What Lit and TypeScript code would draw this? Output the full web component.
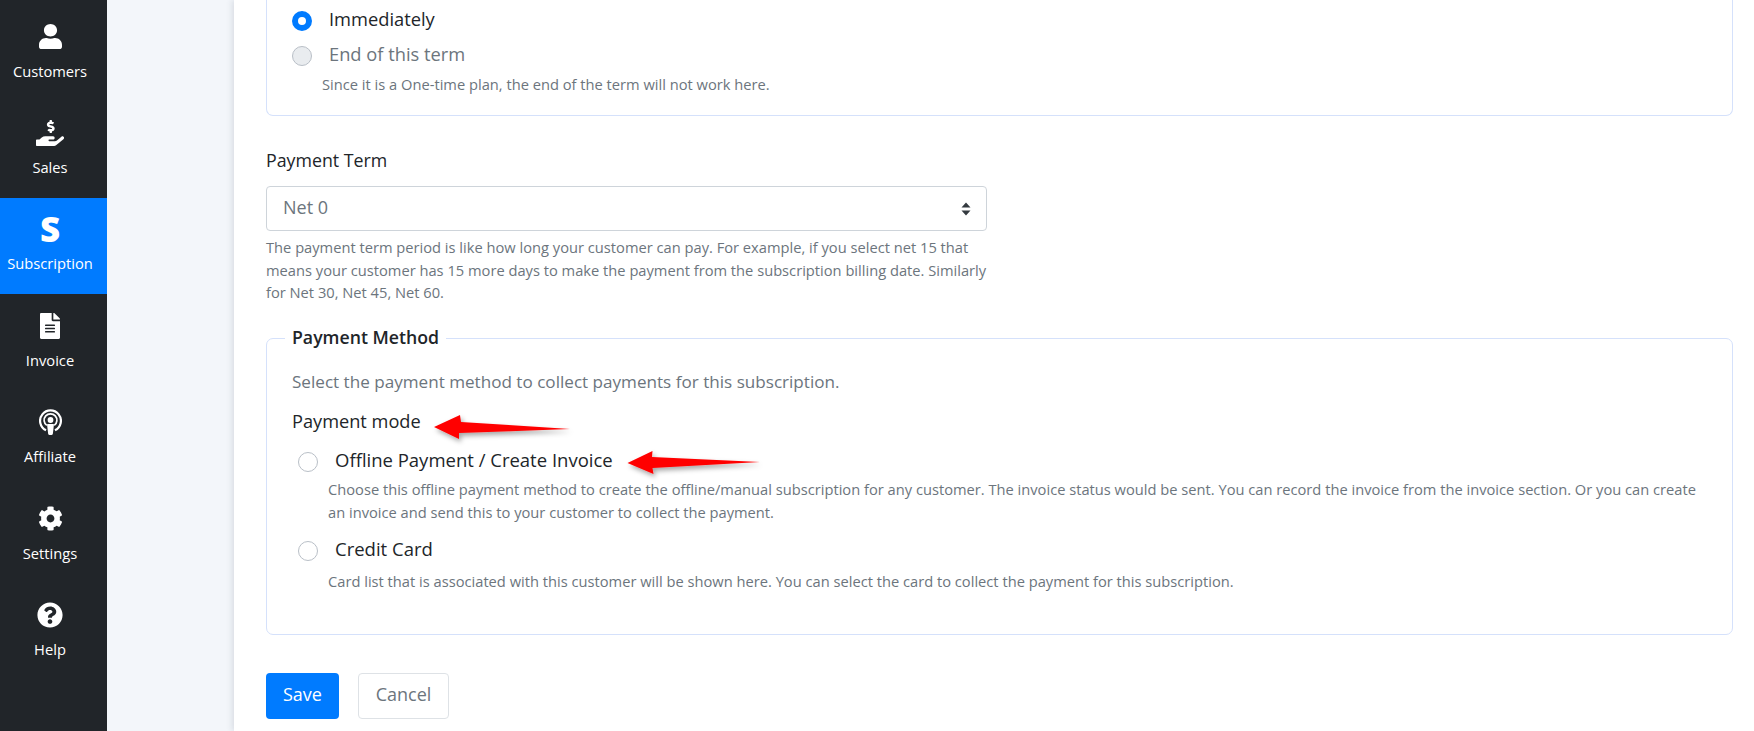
import { LitElement, html, css, svg } from "lit";
import { customElement } from "lit/decorators.js";

const ICONS: Record<string, any> = {
  user: html`<svg class="ic" style="width:23px;height:25px" viewBox="0 0 448 512" preserveAspectRatio="none"><path d="M224 256c70.7 0 128-57.3 128-128S294.7 0 224 0 96 57.3 96 128s57.3 128 128 128zm89.6 32h-16.7c-22.2 10.2-46.9 16-72.9 16s-50.6-5.8-72.9-16h-16.7C60.2 288 0 348.2 0 422.4V464c0 26.5 21.5 48 48 48h352c26.5 0 48-21.5 48-48v-41.6c0-74.2-60.2-134.4-134.4-134.4z"/></svg>`,
  hand: html`<svg class="ic" style="width:28px;height:26px" viewBox="0 0 576 512" preserveAspectRatio="none"><path d="M271.06,144.3l54.27,14.3a8.59,8.59,0,0,1,6.63,8.1c0,4.6-4.09,8.4-9.12,8.4h-35.6a30,30,0,0,1-11.19-2.2c-5.24-2.2-11.28-1.7-15.3,2l-19,17.5a11.68,11.68,0,0,0-2.25,2.66,11.42,11.42,0,0,0,3.88,15.74,83.77,83.77,0,0,0,34.51,11.5V240c0,8.8,7.83,16,17.37,16h17.37c9.55,0,17.38-7.2,17.38-16V222.4c32.93-3.6,57.84-31,53.5-63-3.15-23-22.46-41.3-46.56-47.7L282.68,97.4a8.59,8.59,0,0,1-6.63-8.1c0-4.6,4.09-8.4,9.12-8.4h35.6A30,30,0,0,1,332,83.1c5.23,2.2,11.28,1.7,15.3-2l19-17.5A11.31,11.31,0,0,0,368.47,61a11.43,11.43,0,0,0-3.84-15.78,83.82,83.82,0,0,0-34.52-11.5V16c0-8.8-7.82-16-17.37-16H295.37C285.82,0,278,7.2,278,16V33.6c-32.89,3.6-57.85,31-53.51,63C227.63,119.6,247,137.9,271.06,144.3ZM565.27,328.1c-11.8-10.7-30.2-10-42.6,0L430.27,402a63.64,63.64,0,0,1-40,14H272a16,16,0,0,1,0-32h78.29c15.9,0,30.71-10.9,33.25-26.6a31.2,31.2,0,0,0,.46-5.46A32,32,0,0,0,352,320H192a117.66,117.66,0,0,0-74.1,26.29L71.4,384H16A16,16,0,0,0,0,400v96a16,16,0,0,0,16,16H372.77a64,64,0,0,0,40-14L564,377a32,32,0,0,0,1.28-48.9Z"/></svg>`,
  s: html`<span class="s-icon">S</span>`,
  file: html`<svg class="ic" style="width:20px;height:26px" viewBox="0 0 384 512" preserveAspectRatio="none"><path d="M224 136V0H24C10.7 0 0 10.7 0 24v464c0 13.3 10.7 24 24 24h336c13.3 0 24-10.7 24-24V160H248c-13.2 0-24-10.8-24-24zm64 236c0 6.6-5.4 12-12 12H108c-6.6 0-12-5.4-12-12v-8c0-6.6 5.4-12 12-12h168c6.6 0 12 5.4 12 12v8zm0-64c0 6.6-5.4 12-12 12H108c-6.6 0-12-5.4-12-12v-8c0-6.6 5.4-12 12-12h168c6.6 0 12 5.4 12 12v8zm0-72v8c0 6.6-5.4 12-12 12H108c-6.6 0-12-5.4-12-12v-8c0-6.6 5.4-12 12-12h168c6.6 0 12 5.4 12 12zm96-114.1v6.1H256V0h6.1c6.4 0 12.5 2.5 17 7l97.9 98c4.5 4.5 7 10.6 7 16.9z"/></svg>`,
  cast: html`<svg class="ic" style="width:23px;height:26px" viewBox="0 0 23 26"><path d="M7 21.2A10.4 10.4 0 1 1 16 21.2" fill="none" stroke="#fff" stroke-width="2.2"/><path d="M7.8 16.4A6.4 6.4 0 1 1 15.2 16.4" fill="none" stroke="#fff" stroke-width="1.7"/><circle cx="11.5" cy="11" r="2.9"/><path d="M9 15h5c.7 0 1 .4.9 1l-1 8.4c-.1 1-.9 1.6-2.4 1.6s-2.3-.6-2.4-1.6l-1-8.4c-.1-.6.2-1 .9-1z"/></svg>`,
  cog: html`<svg class="ic" style="width:25px;height:25px" viewBox="0 0 512 512"><path d="M487.4 315.7l-42.6-24.6c4.3-23.2 4.3-47 0-70.2l42.6-24.6c4.9-2.8 7.1-8.6 5.5-14-11.1-35.6-30-67.8-54.7-94.6-3.8-4.1-10-5.1-14.8-2.3L380.8 110c-17.9-15.4-38.5-27.3-60.8-35.1V25.8c0-5.6-3.9-10.5-9.4-11.7-36.7-8.2-74.3-7.8-109.2 0-5.5 1.2-9.4 6.1-9.4 11.7V75c-22.2 7.9-42.8 19.8-60.8 35.1L88.7 85.5c-4.9-2.8-11-1.9-14.8 2.3-24.7 26.7-43.6 58.9-54.7 94.6-1.7 5.4.6 11.2 5.5 14L67.3 221c-4.3 23.2-4.3 47 0 70.2l-42.6 24.6c-4.9 2.8-7.1 8.6-5.5 14 11.1 35.6 30 67.8 54.7 94.6 3.8 4.1 10 5.1 14.8 2.3l42.6-24.6c17.9 15.4 38.5 27.3 60.8 35.1v49.2c0 5.6 3.9 10.5 9.4 11.7 36.7 8.2 74.3 7.8 109.2 0 5.5-1.2 9.4-6.1 9.4-11.7v-49.2c22.2-7.9 42.8-19.8 60.8-35.1l42.6 24.6c4.9 2.8 11 1.9 14.8-2.3 24.7-26.7 43.6-58.9 54.7-94.6 1.5-5.5-.7-11.3-5.6-14.1zM256 336c-44.1 0-80-35.9-80-80s35.9-80 80-80 80 35.9 80 80-35.9 80-80 80z"/></svg>`,
  help: html`<svg class="ic" style="width:26px;height:26px" viewBox="0 0 512 512"><path d="M504 256c0 136.997-111.043 248-248 248S8 392.997 8 256C8 119.083 119.043 8 256 8s248 111.083 248 248zM262.655 90c-54.497 0-89.255 22.957-116.549 63.758-3.536 5.286-2.353 12.415 2.715 16.258l34.699 26.31c5.205 3.947 12.621 3.008 16.665-2.122 17.864-22.658 30.113-35.797 57.303-35.797 20.429 0 45.698 13.148 45.698 32.958 0 14.976-12.363 22.667-32.534 33.976C247.128 238.528 216 254.941 216 296v4c0 6.627 5.373 12 12 12h56c6.627 0 12-5.373 12-12v-1.333c0-28.462 83.186-29.647 83.186-106.667 0-58.002-60.165-102-116.531-102zM256 338c-25.365 0-46 20.635-46 46 0 25.364 20.635 46 46 46s46-20.636 46-46c0-25.365-20.635-46-46-46z"/></svg>`,
};

const NAV = [
  ["user", "Customers"],
  ["hand", "Sales"],
  ["s", "Subscription"],
  ["file", "Invoice"],
  ["cast", "Affiliate"],
  ["cog", "Settings"],
  ["help", "Help"],
];

@customElement("app-root")
export class AppRoot extends LitElement {
  static styles = css`
    :host {
      display: flex;
      position: relative;
      width: 1754px;
      height: 731px;
      overflow: hidden;
      background: #f3f6fa;
      font-family: "Open Sans", "Noto Sans", sans-serif;
      font-size: 18px;
      color: #212529;
    }
    .side {
      width: 107px;
      flex: none;
      background: #212529;
      color: #fff;
      display: flex;
      flex-direction: column;
      padding-top: 5.3px;
      box-sizing: border-box;
    }
    .nav {
      height: 96.35px;
      flex: none;
      display: flex;
      flex-direction: column;
      align-items: center;
      padding: 17.5px 7px 0 0;
      box-sizing: border-box;
      font-size: 14.7px;
      color: #fff;
    }
    .nav.on { background: #007bff; }
    .icon-box {
      height: 28px;
      display: flex;
      align-items: center;
      justify-content: center;
    }
    .ic { fill: #fff; display: block; }
    .s-icon {
      font-weight: 800;
      font-size: 35px;
      line-height: 28px;
    }
    .nav span.t { margin-top: 10px; line-height: 20px; white-space: nowrap; }
    .gutter { width: 127px; flex: none; }
    .main {
      flex: 1;
      background: #fff;
      box-shadow: -2px 0 6px rgba(60, 70, 90, 0.14);
      padding: 0 21px 0 32px;
      min-width: 0;
    }
    .card.top {
      border: 1px solid #d5e1fb;
      border-radius: 7px;
      border-top: 0;
      border-top-left-radius: 0;
      border-top-right-radius: 0;
      height: 116px;
      box-sizing: border-box;
      padding: 3.5px 0 0 25px;
    }
    .radio-row {
      display: flex;
      align-items: center;
      height: 35px;
    }
    .radio {
      width: 20px;
      height: 20px;
      border-radius: 50%;
      box-sizing: border-box;
      flex: none;
      border: 1px solid #b9bfc7;
      background: #fff;
    }
    .radio.checked { border: 6.5px solid #007bff; }
    .radio.disabled { background: #e9ecef; }
    .lab { margin: -5px 0 0 17px; line-height: 25px; font-size: 18.3px; }
    .opt .lab { font-size: 18.5px; margin-top: -5px; }
    .muted { color: #6c757d; }
    .note { font-size: 14.68px; color: #6c757d; line-height: 22.5px; }
    .note.top-note { margin: -1px 0 0 30px; }
    .field-label { margin-top: 32px; line-height: 25px; font-size: 17.8px; }
    .select {
      margin-top: 13px;
      width: 721px;
      height: 45px;
      box-sizing: border-box;
      border: 1px solid #ced4da;
      border-radius: 4px;
      display: flex;
      align-items: center;
      justify-content: space-between;
      padding: 0 15px 0 16px;
      color: #6c757d;
    }
    .select span { margin-top: -3px; }
    .help { width: 721px; margin-top: 5px; }
    .fs {
      margin-top: 34.5px;
      height: 297px;
      box-sizing: border-box;
      position: relative;
      border: 1px solid #d5e1fb;
      border-radius: 7px;
    }
    .legend {
      position: absolute;
      top: -14px;
      left: 18px;
      background: #fff;
      padding: 0 7px;
      font-weight: 600;
      font-size: 17.7px;
      line-height: 25px;
    }
    .fs-body { padding: 30px 0 0 25px; }
    .intro { color: #6c757d; font-size: 17.1px; line-height: 25px; }
    .mode { margin-top: 15px; line-height: 25px; font-size: 18.2px; }
    .opt { display: flex; align-items: center; height: 35px; padding-left: 6px; }
    .opt-first { margin-top: 10px; }
    .opt-second { margin-top: 10.5px; }
    .opt-note { margin: -1px 0 0 36px; width: 1380px; }
    .opt-note.second { margin-top: 1px; }
    .actions { margin-top: 38px; display: flex; gap: 19px; }
    .btn {
      height: 46px;
      box-sizing: border-box;
      border-radius: 4px;
      display: flex;
      align-items: center;
      justify-content: center;
      font-size: 18px;
      padding-bottom: 4px;
    }
    .save { width: 73px; background: #007bff; color: #fff; }
    .cancel { width: 91px; background: #fff; border: 1px solid #dee2e6; color: #6c757d; }
    .arrows {
      position: absolute;
      left: 0;
      top: 0;
      pointer-events: none;
    }
  `;

  render() {
    return html`
      <aside class="side">
        ${NAV.map(
          ([ic, t]) => html`<div class="nav ${t === "Subscription" ? "on" : ""}">
            <div class="icon-box">${ICONS[ic]}</div>
            <span class="t">${t}</span>
          </div>`
        )}
      </aside>
      <div class="gutter"></div>
      <main class="main">
        <div class="card top">
          <div class="radio-row"><span class="radio checked"></span><span class="lab">Immediately</span></div>
          <div class="radio-row"><span class="radio disabled"></span><span class="lab muted">End of this term</span></div>
          <div class="note top-note">Since it is a One-time plan, the end of the term will not work here.</div>
        </div>
        <div class="field-label">Payment Term</div>
        <div class="select">
          <span>Net 0</span>
          <svg width="10" height="14" viewBox="0 0 10 14"><path d="M5 0.5 9.5 5.5H.5Z M5 13.5 .5 8.5H9.5Z" fill="#343a40"/></svg>
        </div>
        <div class="note help">The payment term period is like how long your customer can pay. For example, if you select net 15 that means your customer has 15 more days to make the payment from the subscription billing date. Similarly for Net 30, Net 45, Net 60.</div>
        <section class="fs">
          <div class="legend">Payment Method</div>
          <div class="fs-body">
            <div class="intro">Select the payment method to collect payments for this subscription.</div>
            <div class="mode">Payment mode</div>
            <div class="opt opt-first"><span class="radio"></span><span class="lab">Offline Payment / Create Invoice</span></div>
            <div class="note opt-note">Choose this offline payment method to create the offline/manual subscription for any customer. The invoice status would be sent. You can record the invoice from the invoice section. Or you can create an invoice and send this to your customer to collect the payment.</div>
            <div class="opt opt-second"><span class="radio"></span><span class="lab">Credit Card</span></div>
            <div class="note opt-note second">Card list that is associated with this customer will be shown here. You can select the card to collect the payment for this subscription.</div>
          </div>
        </section>
        <div class="actions">
          <div class="btn save">Save</div>
          <div class="btn cancel">Cancel</div>
        </div>
      </main>
      <svg class="arrows" width="1754" height="731" viewBox="0 0 1754 731">
        <defs><filter id="sh" x="-20%" y="-50%" width="140%" height="220%"><feDropShadow dx="2" dy="3" stdDeviation="2.5" flood-color="#000" flood-opacity=".35"/></filter></defs>
        ${svg`<path filter="url(#sh)" fill="#f00" d="M434 427 460 415 461 422 570 429 459 433 459 439Z"/>
        <path filter="url(#sh)" fill="#f00" d="M627.5 463 652.5 451 652 457 760 462 652.5 468 653.5 474Z"/>`}
      </svg>
    `;
  }
}
